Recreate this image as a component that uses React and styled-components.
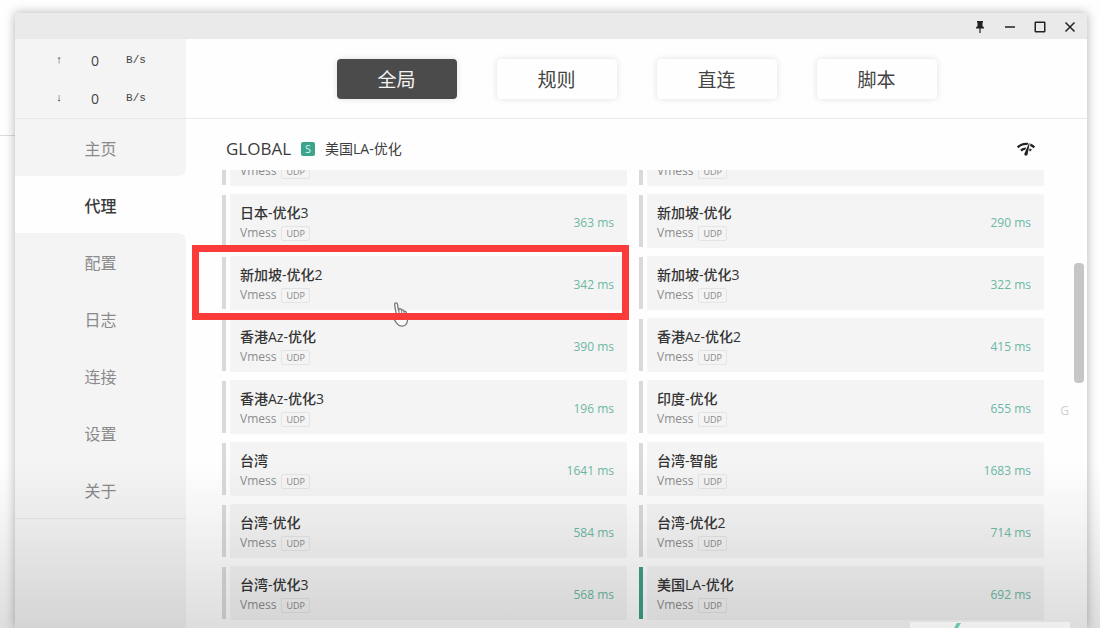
import { useLayoutEffect, useRef, useState } from "react";
import styled, { createGlobalStyle, css } from "styled-components";
import { MdNetworkCheck } from "react-icons/md";

const GlobalStyle = createGlobalStyle`
  *, *::before, *::after {
    box-sizing: border-box;
  }

  body {
    margin: 0;
    background: #fefefe;
    font-family: "Open Sans", "Noto Sans CJK SC", sans-serif;
    color: #3c3c3c;
    overflow: hidden;
  }

  button {
    font: inherit;
    color: inherit;
    border: 0;
    padding: 0;
    background: none;
    cursor: pointer;
  }
`;

const Desktop = styled.div`
  position: relative;
  display: flex;
  height: 100vh;
  padding: 13px 13px 0 15px;
`;

const BackLine = styled.span`
  position: absolute;
  left: 0;
  top: 135px;
  width: 15px;
  height: 1px;
  background: #dcdcdc;
`;

const AppWindow = styled.div`
  position: relative;
  flex: 1;
  display: flex;
  flex-direction: column;
  min-width: 0;
  background: #fefefe;
  box-shadow: 0 0 10px rgba(0, 0, 0, 0.3);
`;

const TitleBar = styled.header`
  display: flex;
  justify-content: flex-end;
  height: 26px;
  padding-right: 2px;
  background: #eaeaea;
`;

const WindowButton = styled.button`
  display: flex;
  align-items: center;
  justify-content: center;
  width: 30px;
  height: 28px;
  color: #222;
`;

const Body = styled.div`
  flex: 1;
  display: flex;
  min-height: 0;
`;

const Sidebar = styled.aside`
  width: 171px;
  background: #f4f4f4;
  flex-shrink: 0;
`;

const Traffic = styled.div`
  height: 80px;
  padding-top: 2px;
  border-bottom: 1px solid #e6e6e6;
`;

const TrafficRow = styled.div`
  display: grid;
  grid-template-columns: 24px 48px 34px;
  align-items: center;
  height: 38px;
  padding-left: 32px;
  text-align: center;
  font-family: "Liberation Mono", monospace;
  font-size: 11px;
  color: #444;
`;

const TrafficValue = styled.span`
  font-family: "Open Sans", sans-serif;
  font-size: 14px;
`;

const Menu = styled.nav`
  display: flex;
  flex-direction: column;
  border-bottom: 1px solid #e6e6e6;
  background: #fefefe;
`;

const MenuItem = styled.button`
  height: 57px;
  font-size: 16px;
  color: #8a8a8a;
  background: #f4f4f4;

  &:has(+ [aria-current="page"]) {
    border-bottom-right-radius: 8px;
  }

  [aria-current="page"] + & {
    border-top-right-radius: 8px;
  }

  ${({ $active }) =>
    $active &&
    css`
      color: #3a3a3a;
      background: #fefefe;
      font-weight: 500;
    `}
`;

const Main = styled.main`
  position: relative;
  flex: 1;
  display: flex;
  flex-direction: column;
  min-width: 0;
`;

const ModeBar = styled.div`
  display: flex;
  justify-content: center;
  gap: 40px;
  height: 80px;
  padding-top: 20px;
  border-bottom: 1px solid #e8e8e8;
`;

const ModeButton = styled.button`
  width: 120px;
  height: 40px;
  border-radius: 4px;
  font-size: 19px;
  line-height: 42px;
  color: ${({ $active }) => ($active ? "#f4f4f4" : "#444")};
  background: ${({ $active }) => ($active ? "#4b4b4b" : "#fefefe")};
  box-shadow: 0 0 6px rgba(0, 0, 0, 0.12);
`;

const GroupHeader = styled.div`
  display: flex;
  align-items: center;
  height: 51px;
  padding: 8px 51px 0 40px;
`;

const GroupName = styled.h1`
  margin: 0;
  font-size: 17px;
  font-weight: 400;
  line-height: 24px;
`;

const GroupType = styled.span`
  width: 14px;
  height: 14px;
  margin: 0 10px;
  border-radius: 2px;
  background: #3ba48a;
  color: #d8f3ec;
  font-size: 11px;
  line-height: 14px;
  text-align: center;
`;

const GroupSelected = styled.span`
  font-size: 14px;
  line-height: 20px;
`;

const TestButton = styled.button`
  display: flex;
  margin-left: auto;
  color: #222;
`;

const ProxyList = styled.ul`
  flex: 1;
  display: grid;
  grid-template-columns: 1fr 1fr;
  grid-auto-rows: 54px;
  gap: 8px 12px;
  min-height: 0;
  margin: 0;
  padding: 0 43px 40px 36px;
  list-style: none;
  overflow-y: scroll;
  scrollbar-width: none;
`;

const ProxyItem = styled.li`
  position: relative;
  display: flex;
  z-index: ${({ $marked }) => ($marked ? 1 : 0)};
`;

const ProxyCard = styled.button`
  flex: 1;
  display: flex;
  align-items: center;
  gap: 4px;
  text-align: left;

  &::before {
    content: "";
    width: 4px;
    height: 52px;
    background: ${({ $selected }) => ($selected ? "#3f9f86" : "#d9d9d9")};
  }
`;

const CardBody = styled.span`
  flex: 1;
  display: flex;
  align-items: center;
  justify-content: space-between;
  height: 54px;
  padding: 2px 13px 0 10px;
  border-radius: 2px;
  background: #f4f4f4;
`;

const ProxyName = styled.span`
  display: block;
  min-height: 22px;
  font-size: 14px;
  font-weight: 500;
  line-height: 22px;
  color: #333;
`;

const ProxyMeta = styled.span`
  display: flex;
  align-items: center;
  gap: 5px;
  font-size: 12px;
  line-height: 18px;
  color: #8c8c8c;
`;

const UdpTag = styled.span`
  padding: 0 4px;
  border: 1px solid #e4e4e4;
  border-radius: 2px;
  font-size: 9px;
  line-height: 13px;
  color: #888;
`;

const Delay = styled.span`
  font-size: 12px;
  font-weight: 500;
  color: #6cb8a4;
`;

const Mark = styled.span`
  position: absolute;
  inset: -11px -2px -10px -30px;
  border: 7px solid #fb3a3a;
  pointer-events: none;
`;

const Pointer = styled.svg`
  position: absolute;
  left: 170px;
  top: 46px;
  pointer-events: none;
`;

const ScrollThumb = styled.span`
  position: absolute;
  right: 3px;
  top: 224px;
  width: 10px;
  height: 120px;
  border-radius: 4px;
  background: #c6c6c6;
`;

const SideLetter = styled.span`
  position: absolute;
  right: 18px;
  top: 364px;
  font-size: 12px;
  line-height: 16px;
  color: #cfcfcf;
`;

const Shade = styled.div`
  position: absolute;
  inset: auto 0 0 0;
  height: 168px;
  background: linear-gradient(rgba(0, 0, 0, 0), rgba(0, 0, 0, 0.04) 35%, rgba(0, 0, 0, 0.13));
  pointer-events: none;
`;

const CornerPanel = styled.div`
  position: absolute;
  right: 30px;
  bottom: 0;
  width: 160px;
  height: 6px;
  background: #eee;

  svg {
    display: block;
    margin-left: 43px;
  }
`;

const menu = ["主页", "代理", "配置", "日志", "连接", "设置", "关于"];
const modes = ["全局", "规则", "直连", "脚本"];

const proxies = [
  { id: 1, name: "", delay: "" },
  { id: 2, name: "", delay: "" },
  { id: 3, name: "日本-优化3", delay: "363 ms" },
  { id: 4, name: "新加坡-优化", delay: "290 ms" },
  { id: 5, name: "新加坡-优化2", delay: "342 ms" },
  { id: 6, name: "新加坡-优化3", delay: "322 ms" },
  { id: 7, name: "香港Az-优化", delay: "390 ms" },
  { id: 8, name: "香港Az-优化2", delay: "415 ms" },
  { id: 9, name: "香港Az-优化3", delay: "196 ms" },
  { id: 10, name: "印度-优化", delay: "655 ms" },
  { id: 11, name: "台湾", delay: "1641 ms" },
  { id: 12, name: "台湾-智能", delay: "1683 ms" },
  { id: 13, name: "台湾-优化", delay: "584 ms" },
  { id: 14, name: "台湾-优化2", delay: "714 ms" },
  { id: 15, name: "台湾-优化3", delay: "568 ms" },
  { id: 16, name: "美国LA-优化", delay: "692 ms" },
];

const markedProxy = "新加坡-优化2";

function HandPointer() {
  return (
    <Pointer width="18" height="26" viewBox="0 0 18 26">
      <path
        d="M2.6 2.2c0-1.6 2.4-1.8 2.8-.2l1.2 6.6.2-1.3c.6-1 2.2-.8 2.5.4l.2.7c.6-.9 2.1-.7 2.4.5l.2.8c.7-.7 1.9-.4 2.2.7.8 3 1.8 6.6.9 9.5-.7 2.5-2.4 4-4.8 4.2-2.4.2-4.2-.8-5.6-2.8L1 15.8c-.8-1.5.9-2.6 2.1-1.5l1.6 1.5z"
        fill="#fafafa"
        stroke="#777"
        strokeWidth="1.3"
        strokeLinejoin="round"
      />
      <path d="M7 8.5v3.5M9.700 8.800V12M12.300 9.500V12.500" stroke="#777" strokeWidth="1" />
    </Pointer>
  );
}

function WindowControls() {
  return (
    <>
      <WindowButton aria-label="Pin">
        <svg width="12" height="14" viewBox="0 0 12 14">
          <path d="M3 1h6v1.5H8.500V6L10 7.500v1H6.600V13H5.400V8.500H2v-1L3.500 6V2.500H3z" fill="currentColor" />
        </svg>
      </WindowButton>
      <WindowButton aria-label="Minimize">
        <svg width="12" height="12" viewBox="0 0 12 12">
          <path d="M1 6h10" stroke="currentColor" strokeWidth="1.5" />
        </svg>
      </WindowButton>
      <WindowButton aria-label="Maximize">
        <svg width="12" height="12" viewBox="0 0 12 12" fill="none">
          <rect x="1.25" y="1.25" width="9.5" height="9.5" rx="0.5" stroke="currentColor" strokeWidth="1.5" />
        </svg>
      </WindowButton>
      <WindowButton aria-label="Close">
        <svg width="12" height="12" viewBox="0 0 12 12">
          <path d="M1.500 1.500l9 9M10.500 1.500l-9 9" stroke="currentColor" strokeWidth="1.5" />
        </svg>
      </WindowButton>
    </>
  );
}

function Proxy({ proxy, selected, marked, onSelect }) {
  return (
    <ProxyItem $marked={marked}>
      <ProxyCard type="button" $selected={selected} onClick={() => onSelect(proxy.name)}>
        <CardBody>
          <span>
            <ProxyName>{proxy.name}</ProxyName>
            <ProxyMeta>
              Vmess <UdpTag>UDP</UdpTag>
            </ProxyMeta>
          </span>
          <Delay>{proxy.delay}</Delay>
        </CardBody>
      </ProxyCard>
      {marked && (
        <>
          <HandPointer />
          <Mark />
        </>
      )}
    </ProxyItem>
  );
}

export default function App() {
  const [page, setPage] = useState("代理");
  const [mode, setMode] = useState("全局");
  const [selected, setSelected] = useState("美国LA-优化");
  const listRef = useRef(null);

  useLayoutEffect(() => {
    listRef.current.scrollTop = 38;
  }, []);

  return (
    <Desktop>
      <GlobalStyle />
      <BackLine />
      <AppWindow>
        <TitleBar>
          <WindowControls />
        </TitleBar>
        <Body>
          <Sidebar>
            <Traffic>
              <TrafficRow>
                <span>↑</span>
                <TrafficValue>0</TrafficValue>
                <span>B/s</span>
              </TrafficRow>
              <TrafficRow>
                <span>↓</span>
                <TrafficValue>0</TrafficValue>
                <span>B/s</span>
              </TrafficRow>
            </Traffic>
            <Menu>
              {menu.map((item) => (
                <MenuItem
                  key={item}
                  $active={item === page}
                  aria-current={item === page ? "page" : undefined}
                  onClick={() => setPage(item)}
                >
                  {item}
                </MenuItem>
              ))}
            </Menu>
          </Sidebar>
          <Main>
            <ModeBar>
              {modes.map((item) => (
                <ModeButton key={item} $active={item === mode} onClick={() => setMode(item)}>
                  {item}
                </ModeButton>
              ))}
            </ModeBar>
            <GroupHeader>
              <GroupName>GLOBAL</GroupName>
              <GroupType>S</GroupType>
              <GroupSelected>{selected}</GroupSelected>
              <TestButton aria-label="Test delay">
                <MdNetworkCheck size={20} />
              </TestButton>
            </GroupHeader>
            <ProxyList ref={listRef}>
              {proxies.map((proxy) => (
                <Proxy
                  key={proxy.id}
                  proxy={proxy}
                  selected={proxy.name === selected}
                  marked={proxy.name === markedProxy}
                  onSelect={setSelected}
                />
              ))}
            </ProxyList>
            <ScrollThumb />
            <SideLetter>G</SideLetter>
          </Main>
        </Body>
      </AppWindow>
      <Shade />
      <CornerPanel>
        <svg width="10" height="6" viewBox="0 0 10 6">
          <path d="M4 1h4L5 6H1z" fill="#6cc5b0" />
        </svg>
      </CornerPanel>
    </Desktop>
  );
}
